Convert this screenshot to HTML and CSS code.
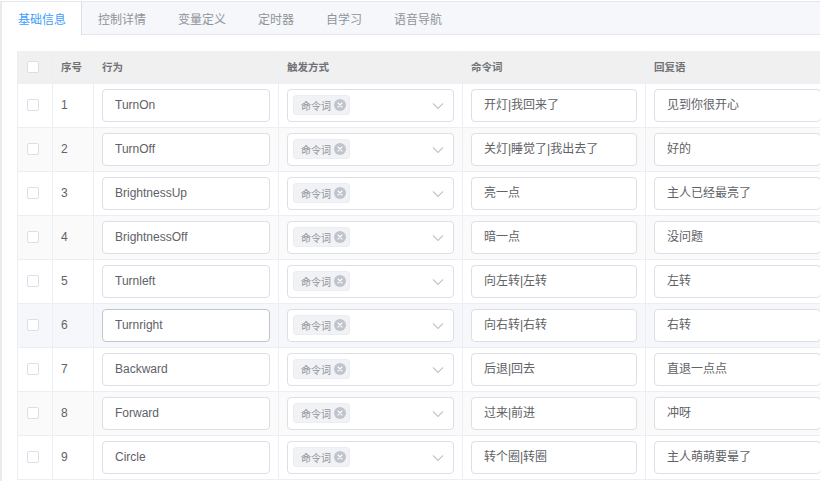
FILE: index.html
```html
<!DOCTYPE html>
<html lang="zh">
<head>
<meta charset="utf-8">
<link rel="stylesheet" href="styles.css">
</head>
<body>
<div class="card">
  <div class="tabs">
    <div class="tab active">基础信息</div>
    <div class="tab">控制详情</div>
    <div class="tab">变量定义</div>
    <div class="tab">定时器</div>
    <div class="tab">自学习</div>
    <div class="tab">语音导航</div>
  </div>
  <div class="content">
    <table class="grid">
      <colgroup>
        <col class="c-check"><col class="c-no"><col class="c-act"><col class="c-trig"><col class="c-cmd"><col class="c-reply">
      </colgroup>
      <thead>
        <tr>
          <th><span class="checkbox"></span></th>
          <th>序号</th>
          <th>行为</th>
          <th>触发方式</th>
          <th>命令词</th>
          <th>回复语</th>
        </tr>
      </thead>
      <tbody id="rows"></tbody>
    </table>
  </div>
</div>
<template id="row-tpl">
  <tr>
    <td><span class="checkbox"></span></td>
    <td class="num"></td>
    <td><div class="input act"></div></td>
    <td>
      <div class="select">
        <span class="tag">命令词<span class="tag-close"><svg viewBox="0 0 12 12" width="12" height="12"><circle cx="6" cy="6" r="6" fill="#c0c4cc"/><path d="M4 4l4 4M8 4l-4 4" stroke="#fff" stroke-width="1.1" stroke-linecap="round"/></svg></span></span>
        <svg class="arrow" viewBox="0 0 12 8" width="12" height="8"><path d="M1 1.5l5 5 5-5" fill="none" stroke="#c0c4cc" stroke-width="1.1"/></svg>
      </div>
    </td>
    <td><div class="input cmd"></div></td>
    <td><div class="input reply"></div></td>
  </tr>
</template>
<script src="app.js"></script>
</body>
</html>
```
FILE: app.js
```js
const data = [
  ["TurnOn", "开灯|我回来了", "见到你很开心"],
  ["TurnOff", "关灯|睡觉了|我出去了", "好的"],
  ["BrightnessUp", "亮一点", "主人已经最亮了"],
  ["BrightnessOff", "暗一点", "没问题"],
  ["Turnleft", "向左转|左转", "左转"],
  ["Turnright", "向右转|右转", "右转"],
  ["Backward", "后退|回去", "直退一点点"],
  ["Forward", "过来|前进", "冲呀"],
  ["Circle", "转个圈|转圈", "主人萌萌要晕了"]
];
const tbody = document.getElementById("rows");
const tpl = document.getElementById("row-tpl");
data.forEach((d, i) => {
  const row = tpl.content.firstElementChild.cloneNode(true);
  row.querySelector(".num").textContent = i + 1;
  row.querySelector(".act").textContent = d[0];
  row.querySelector(".cmd").textContent = d[1];
  row.querySelector(".reply").textContent = d[2];
  if (i % 2 === 1) row.classList.add("striped");
  if (i === 5) {
    row.classList.add("hover");
    row.querySelector(".act").classList.add("hovered");
  }
  tbody.appendChild(row);
});
```
FILE: styles.css
```css
html, body {
  margin: 0;
  padding: 0;
  background: #fff;
  overflow: hidden;
}
body {
  width: 820px;
  height: 481px;
  font-family: "Liberation Sans", "Noto Sans CJK SC", sans-serif;
  font-size: 12px;
  color: #606266;
}
.card {
  margin: 1px 0 0 0;
  border-left: 2px solid #e9ebef;
  border-top: 1px solid #e4e7ed;
  height: 480px;
  box-sizing: border-box;
  overflow: hidden;
}
.tabs {
  display: flex;
  height: 33px;
  background: #f5f7fa;
  border-bottom: 1px solid #e4e7ed;
  box-sizing: border-box;
}
.tab {
  padding: 3px 16px 0;
  line-height: 31px;
  color: #909399;
  font-size: 12px;
  box-sizing: border-box;
}
.tab.active {
  background: #fff;
  color: #409eff;
  border-right: 1px solid #dcdfe6;
  height: 33px;
  padding-right: 15px;
}
.content {
  padding: 16px 0 0 15px;
}
.grid {
  table-layout: fixed;
  border-collapse: collapse;
  width: 812px;
  border-left: 1px solid #ebeef5;
}
.c-check { width: 35px; }
.c-no { width: 41px; }
.c-act { width: 185px; }
.c-trig { width: 184px; }
.c-cmd { width: 183px; }
.c-reply { width: 184px; }
.grid th {
  height: 32px;
  background: #f0f0f0;
  color: #707276;
  font-size: 10.5px;
  font-weight: bold;
  text-align: left;
  padding: 0 8px;
  border-right: 1px solid #ebeef5;
  border-bottom: 1px solid #ebeef5;
  box-sizing: border-box;
}
.grid td {
  height: 44px;
  padding: 0 8px 0 8px;
  border-right: 1px solid #ebeef5;
  border-bottom: 1px solid #ebeef5;
  box-sizing: border-box;
  background: #fff;
  font-size: 12px;
  color: #606266;
}
.grid tr.striped td { background: #fafafa; }
.grid tr.hover td { background: #f5f7fa; }
.grid th:first-child, .grid td:first-child {
  padding: 0 0 0 9px;
}
.checkbox {
  display: block;
  width: 12px;
  height: 12px;
  border: 1px solid #dcdfe6;
  border-radius: 2px;
  background: #fff;
  box-sizing: border-box;
}
.input {
  height: 33px;
  border: 1px solid #dcdfe6;
  border-radius: 4px;
  background: #fff;
  box-sizing: border-box;
  padding: 0 12px;
  line-height: 31px;
  font-size: 12px;
  color: #606266;
  white-space: nowrap;
  overflow: hidden;
}
.input.hovered { border-color: #c0c4cc; }
.select {
  height: 33px;
  border: 1px solid #dcdfe6;
  border-radius: 4px;
  background: #fff;
  box-sizing: border-box;
  display: flex;
  align-items: center;
  padding: 0 9px 0 5px;
  justify-content: space-between;
}
.tag {
  display: inline-flex;
  align-items: center;
  height: 20px;
  padding: 0 3px 0 7px;
  background: #f0f2f5;
  border: 1px solid #ebedf0;
  border-radius: 3px;
  box-sizing: border-box;
  color: #909399;
  font-size: 10px;
}
.tag-close {
  display: inline-flex;
  margin-left: 3px;
}
.tag-close svg { display: block; }
.arrow { display: block; margin-top: 1px; }
```
